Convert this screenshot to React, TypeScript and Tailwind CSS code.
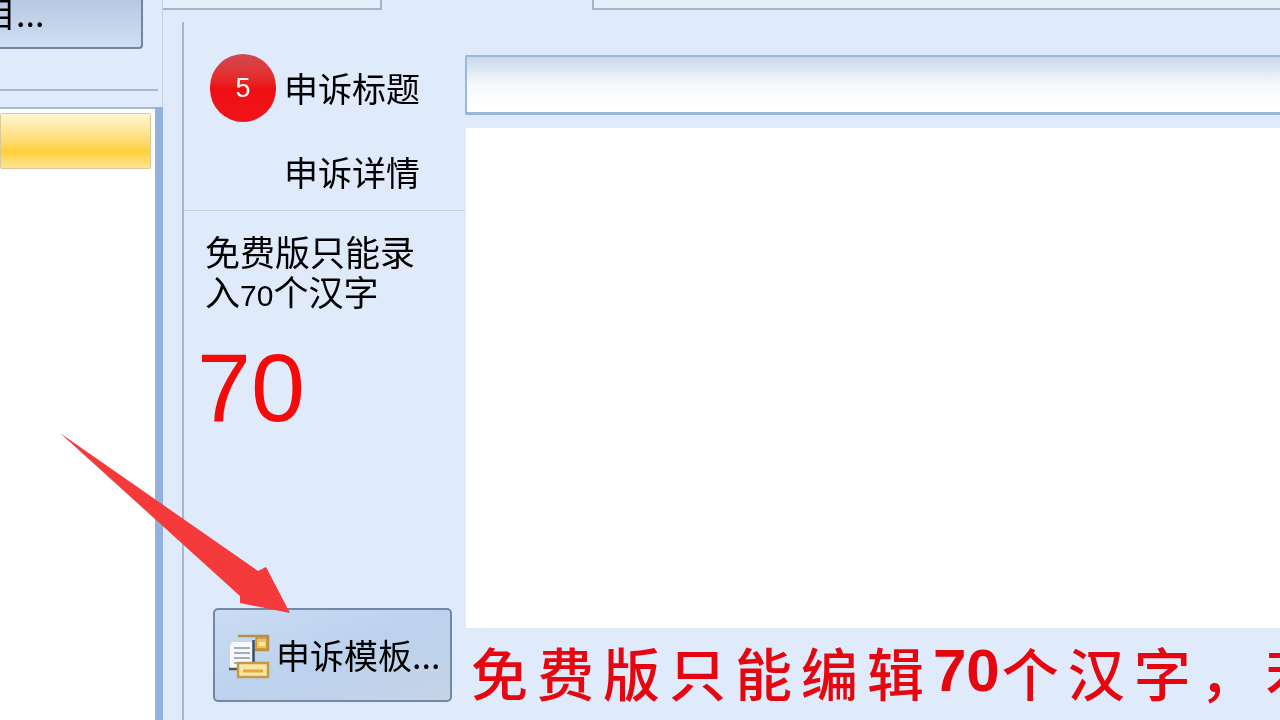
const cjk = "font-['Noto_Sans_CJK_SC','Liberation_Sans',sans-serif]";

function DocIcon() {
  return (
    <svg width="44" height="50" viewBox="0 0 44 50" className="shrink-0">
      <path d="M10 6h30v14H27" fill="none" stroke="#b5904a" strokeWidth="2.5" />
      <rect x="28" y="8" width="11" height="11" fill="#f3c35a" stroke="#c9922e" strokeWidth="1.5" />
      <path d="M31 12h6v4h-6z" fill="#fbe9b4" />
      <path d="M4 12h21v26H2V16z" fill="#f6f8fc" />
      <path d="M6 18h16M6 23h16M6 28h16M6 33h14" stroke="#a3adbb" strokeWidth="2" />
      <path d="M25.5 10v24" stroke="#3c4a63" strokeWidth="2.5" />
      <path d="M1 39h11" stroke="#5c5140" strokeWidth="2.5" />
      <rect x="10" y="33" width="30" height="14" fill="#fbe6a6" stroke="#c39a45" strokeWidth="2.5" />
      <path d="M15 41h20" stroke="#eaa636" strokeWidth="3" />
    </svg>
  );
}

function Arrow() {
  return (
    <svg width="240" height="190" viewBox="0 0 240 190" className="absolute left-[55px] top-[428px] pointer-events-none">
      <polygon points="5,5 203,143 211,139 235,185 185,175 185,168" fill="#f43a3a" />
    </svg>
  );
}

function App() {
  return (
    <div className={`relative flex w-[1280px] h-[720px] overflow-hidden bg-[#dfeafa] text-black ${cjk}`}>
      <div className="flex flex-col w-[163px] shrink-0">
        <div className="h-[107px] shrink-0 border-r border-[#c3d0e2]">
          <div className="h-[91px] w-[158px] border-b-2 border-[#a9b9cd]">
            <div className="flex items-center h-[49px] w-[143px] overflow-hidden rounded-br-[4px] border-r-2 border-b-2 border-[#74869f] bg-gradient-to-b from-[#b7c9e2] to-[#cfdef3]">
              <span className="-ml-[18px] whitespace-nowrap text-[34px] leading-none -translate-y-[11px] blur-[0.5px]">目...</span>
            </div>
          </div>
        </div>
        <div className="flex flex-1 min-h-0">
          <div className="w-[155px] bg-white border-t-2 border-[#a9b9cd]">
            <div className="mt-[4px] h-[56px] w-[151px] rounded-[2px] border border-[#dcc79a] bg-gradient-to-b from-[#fff5d0] via-[#fdd135] via-70% to-[#fee391]" />
          </div>
          <div className="w-[8px] bg-[#92b2dd]" />
        </div>
      </div>

      <div className="flex flex-col flex-1 min-w-0">
        <div className="flex h-[10px] shrink-0">
          <div className="w-[219px] border-b-2 border-r-2 border-[#a4b4c9] bg-[#e5eefb]" />
          <div className="w-[210px]" />
          <div className="flex-1 border-b-2 border-l-2 border-[#a4b4c9] bg-[#e5eefb]" />
        </div>
        <div className="flex flex-1 min-h-0 pl-[19px] pt-[12px]">
          <div className="flex flex-col w-[283px] shrink-0 border-l-2 border-[#a4b6d0]">
            <div className="h-[189px] shrink-0 border-b border-[#c3d0e2] pt-[32px] blur-[0.5px]">
              <div className="flex items-center h-[68px] pl-[26px]">
                <div className="flex items-center justify-center w-[66px] h-[68px] rounded-full bg-gradient-to-b from-[#d0484e] via-[#ee0f14] to-[#f0141a] text-white text-[27px] font-['Liberation_Sans',sans-serif] shrink-0">5</div>
                <span className="ml-[8px] text-[34px] leading-none">申诉标题</span>
              </div>
              <div className="mt-[33px] pl-[100px] text-[34px] leading-none">申诉详情</div>
            </div>
            <div className="pl-[21px] pt-[20px] text-[35px] leading-[40px] blur-[0.5px]">
              <div className="whitespace-nowrap">免费版只能录</div>
              <div className="whitespace-nowrap">入<span className="font-['Liberation_Sans',sans-serif] text-[30px]">70</span>个汉字</div>
            </div>
            <div className="pl-[13px] mt-[17px] text-[97px] leading-[110px] text-[#f50a0a] font-['Liberation_Sans',sans-serif] blur-[0.5px]">70</div>
            <div className="mt-auto mb-[18px] ml-[29px] flex items-center w-[239px] h-[94px] pl-[13px] rounded-[5px] border-2 border-[#7488a6] bg-gradient-to-br from-[#cbdcf4] via-[#bcd2ee] to-[#c5d3e6]">
              <DocIcon />
              <span className="ml-[4px] whitespace-nowrap text-[34px] leading-none blur-[0.5px]">申诉模板...</span>
            </div>
          </div>
          <div className="flex flex-col flex-1 min-w-0 pt-[33px]">
            <div className="h-[60px] shrink-0 border-2 border-b-[3px] border-r-0 border-[#9ab7dc] rounded-l-[2px] bg-gradient-to-b from-[#c9d8ea] via-[#f6f9fc] to-white" />
            <div className="mt-[13px] ml-[1px] h-[500px] shrink-0 bg-white" />
            <div className="mt-[10px] pl-[6px] flex items-center h-[66px] whitespace-nowrap text-[57px] leading-none font-medium text-[#e5060f] blur-[0.5px]">
              <span className="tracking-[9px]">免费版只能编辑</span>
              <span className="font-['Liberation_Sans',sans-serif] font-bold text-[60px] mr-[2px]">70</span>
              <span className="tracking-[9px]">个汉字，若</span>
            </div>
          </div>
        </div>
      </div>
      <Arrow />
    </div>
  );
}

export default App;
